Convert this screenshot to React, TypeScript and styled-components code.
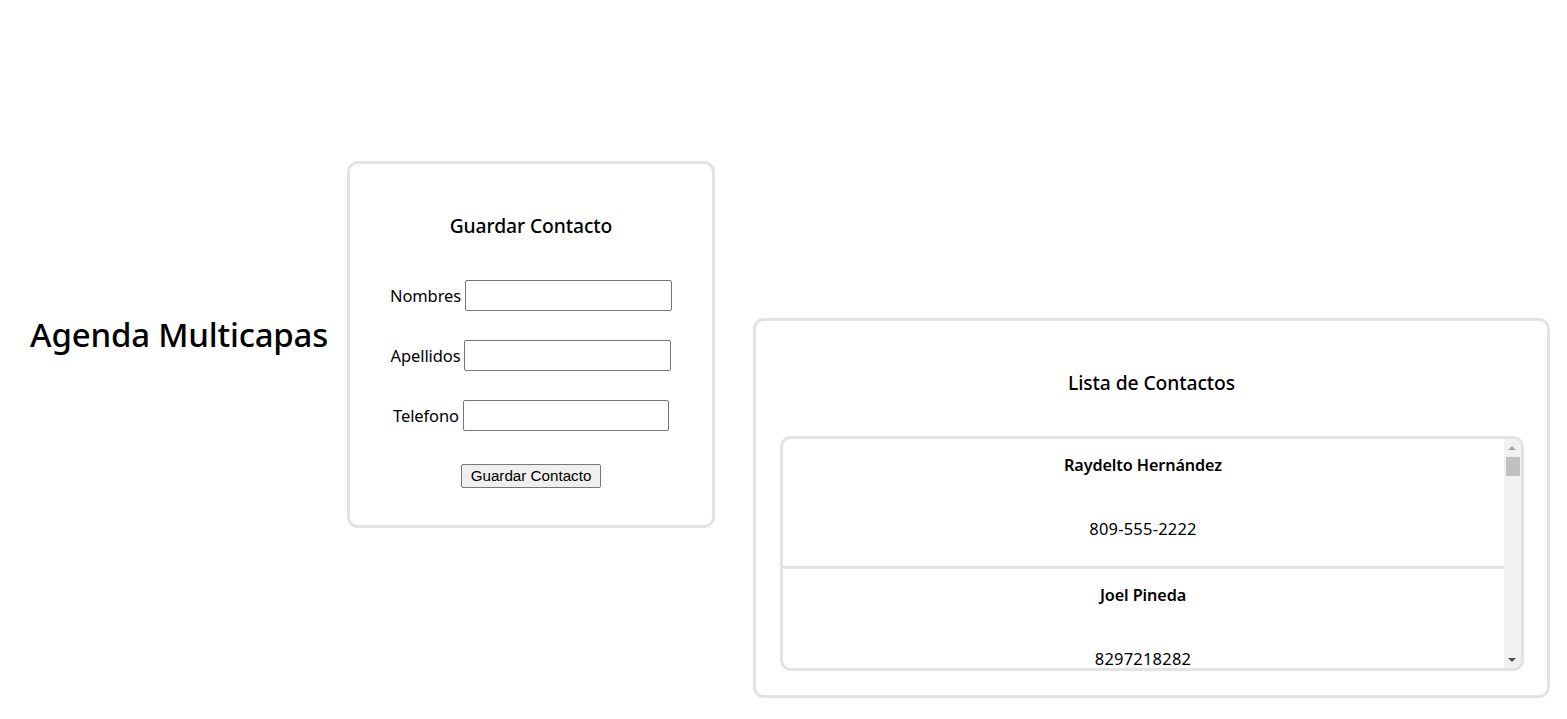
import React from "react";
import styled, { createGlobalStyle } from "styled-components";

const GlobalStyle = createGlobalStyle`
  html, body {
    margin: 0;
    padding: 0;
    background: #ffffff;
  }
  body {
    font-family: "Noto Sans", "Open Sans", sans-serif;
    color: #000;
  }
`;

const Page = styled.div`
  display: flex;
  align-items: flex-start;
  padding: 0 17px 0 30px;
  width: 1567px;
  box-sizing: border-box;
`;

const Title = styled.h1`
  margin: 313px 20px 0 0;
  width: 297px;
  font-size: 33px;
  font-weight: 500;
  line-height: 44px;
  white-space: nowrap;
  letter-spacing: -0.2px;
  flex-shrink: 0;
`;

const Card = styled.section<{ $top: number; $width: number; $height: number }>`
  margin-top: ${(p) => p.$top}px;
  width: ${(p) => p.$width}px;
  height: ${(p) => p.$height}px;
  box-sizing: border-box;
  border: 3px solid #e3e3e3;
  border-radius: 11px;
  display: flex;
  flex-direction: column;
  align-items: center;
  flex-shrink: 0;
`;

const CardTitle = styled.h3`
  margin: 50px 0 0 0;
  font-size: 19.3px;
  font-weight: 500;
  line-height: 24px;
  letter-spacing: -0.1px;
`;

const Form = styled.form`
  display: flex;
  flex-direction: column;
  align-items: center;
  margin-top: 42px;
`;

const Row = styled.div`
  display: flex;
  align-items: center;
  gap: 4px;
  height: 31px;
  margin-bottom: 29px;
`;

const Label = styled.label`
  font-size: 16.5px;
  letter-spacing: -0.1px;
  line-height: 20px;
`;

const Input = styled.input<{ $w: number }>`
  width: ${(p) => p.$w}px;
  height: 31px;
  box-sizing: border-box;
  border: 1px solid #767676;
  border-radius: 2px;
  padding: 1px 2px;
  background: #fff;
  font-size: 14px;
`;

const Button = styled.button`
  margin-top: 4px;
  width: 140px;
  height: 24px;
  box-sizing: border-box;
  border: 1px solid #767676;
  border-radius: 2px;
  background: #efefef;
  font-family: "Liberation Sans", Arial, sans-serif;
  font-size: 15.2px;
  color: #000;
  padding: 0 4px;
  line-height: 20px;
  white-space: nowrap;
`;

const Gap = styled.div<{ $w: number }>`
  width: ${(p) => p.$w}px;
  flex-shrink: 0;
`;

const ListBox = styled.div`
  margin-top: 41px;
  width: 744px;
  height: 235px;
  box-sizing: border-box;
  border: 3px solid #e3e3e3;
  border-radius: 11px;
  overflow: hidden;
  display: flex;
`;

const Items = styled.ul`
  list-style: none;
  margin: 0;
  padding: 0;
  flex: 1;
  min-width: 0;
`;

const Item = styled.li`
  display: flex;
  flex-direction: column;
  align-items: center;
  height: 130px;
  box-sizing: border-box;
  border-bottom: 3px solid #e3e3e3;
  padding-top: 16px;
`;

const Name = styled.h4`
  margin: 0;
  font-size: 16.2px;
  font-weight: 600;
  line-height: 20px;
  letter-spacing: -0.1px;
`;

const Phone = styled.p`
  margin: 44px 0 0 0;
  font-size: 16.5px;
  line-height: 20px;
  letter-spacing: 0.2px;
`;

const ScrollTrack = styled.div`
  width: 17px;
  flex-shrink: 0;
  background: #f1f1f1;
  display: flex;
  flex-direction: column;
`;

const ArrowButton = styled.div<{ $down?: boolean }>`
  height: 17px;
  display: flex;
  align-items: center;
  justify-content: center;
  &::before {
    content: "";
    width: 0;
    height: 0;
    border-left: 4px solid transparent;
    border-right: 4px solid transparent;
    ${(p) =>
      p.$down
        ? "border-top: 4px solid #505050;"
        : "border-bottom: 4px solid #a3a3a3;"}
  }
`;

const Thumb = styled.div`
  height: 19px;
  margin: 1px 1px 0 2px;
  background: #c1c1c1;
`;

const TrackSpace = styled.div`
  flex: 1;
`;

const contacts = [
  { name: "Raydelto Hernández", phone: "809-555-2222" },
  { name: "Joel Pineda", phone: "8297218282" },
];

export default function App() {
  return (
    <>
      <GlobalStyle />
      <Page>
        <Title>Agenda Multicapas</Title>
        <Card $top={161} $width={368} $height={367}>
          <CardTitle>Guardar Contacto</CardTitle>
          <Form onSubmit={(e) => e.preventDefault()}>
            <Row>
              <Label htmlFor="nombres">Nombres</Label>
              <Input id="nombres" $w={207} />
            </Row>
            <Row>
              <Label htmlFor="apellidos">Apellidos</Label>
              <Input id="apellidos" $w={207} />
            </Row>
            <Row>
              <Label htmlFor="telefono">Telefono</Label>
              <Input id="telefono" $w={206} />
            </Row>
            <Button type="submit">Guardar Contacto</Button>
          </Form>
        </Card>
        <Gap $w={38} />
        <Card $top={318} $width={797} $height={380}>
          <CardTitle>Lista de Contactos</CardTitle>
          <ListBox>
            <Items>
              {contacts.map((c) => (
                <Item key={c.name}>
                  <Name>{c.name}</Name>
                  <Phone>{c.phone}</Phone>
                </Item>
              ))}
            </Items>
            <ScrollTrack aria-hidden="true">
              <ArrowButton />
              <Thumb />
              <TrackSpace />
              <ArrowButton $down />
            </ScrollTrack>
          </ListBox>
        </Card>
      </Page>
    </>
  );
}
